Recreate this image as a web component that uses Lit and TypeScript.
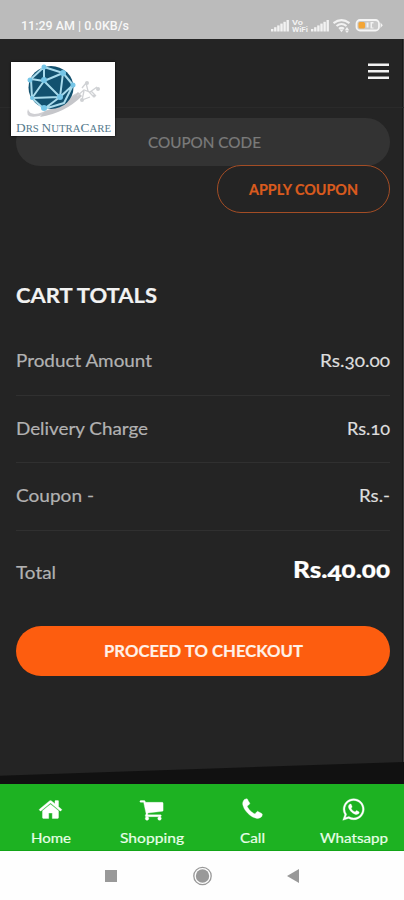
import { LitElement, html, svg, css } from "lit";
import { customElement } from "lit/decorators.js";

const label = (text: string, width: number, size: number, cls = "") => html`
  <svg class="label ${cls}" width=${width} height=${size + 6} font-size=${size}>
    <text x="0" y=${size} textLength=${width} lengthAdjust="spacingAndGlyphs">${text}</text>
  </svg>`;

const ROWS = [
  { name: "Product Amount", nameW: 136, value: "Rs.30.00", valueW: 70 },
  { name: "Delivery Charge", nameW: 132, value: "Rs.10", valueW: 43 },
  { name: "Coupon -", nameW: 78, value: "Rs.-", valueW: 31 },
];

const TABS = [
  {
    text: "Home", width: 40,
    path: "M1472 992v480q0 26-19 45t-45 19h-384v-384h-256v384h-384q-26 0-45-19t-19-45v-480q0-1 .5-3t.5-3l575-474 575 474q1 2 1 6zm223-69l-62 74q-8 9-21 11h-3q-13 0-21-7l-692-577-692 577q-12 8-24 7-13-2-21-11l-62-74q-8-10-7-23.5t11-21.5l719-599q32-26 76-26t76 26l244 204v-195q0-14 9-23t23-9h192q14 0 23 9t9 23v408l219 182q10 8 11 21.5t-7 23.5z",
  },
  {
    text: "Shopping", width: 64,
    path: "M704 1536q0 52-38 90t-90 38-90-38-38-90 38-90 90-38 90 38 38 90zm896 0q0 52-38 90t-90 38-90-38-38-90 38-90 90-38 90 38 38 90zm128-1088v512q0 24-16.5 42.5t-40.5 21.5l-1044 122q13 60 13 70 0 16-24 64h920q26 0 45 19t19 45-19 45-45 19h-1024q-26 0-45-19t-19-45q0-11 8-31.5t16-36 21.5-40 15.5-29.5l-177-823h-204q-26 0-45-19t-19-45 19-45 45-19h256q16 0 28.5 6.5t19.5 15.5 13 24.5 8 26 5.5 29.5 4.5 26h1201q26 0 45 19t19 45z",
  },
  {
    text: "Call", width: 25,
    path: "M1600 1240q0 27-10 70.5t-21 68.5q-21 50-122 106-94 51-186 51-27 0-53-3.5t-57.5-12.5-47-14.5-55.5-20.5-49-18q-98-35-175-83-127-79-264-216t-216-264q-48-77-83-175-3-9-18-49t-20.5-55.5-14.5-47-12.5-57.5-3.5-53q0-92 51-186 56-101 106-122 25-11 68.5-21t70.5-10q14 0 21 3 18 6 53 76 11 19 30 54t35 63.5 31 53.5q3 4 17.5 25t21.5 35.5 7 28.5q0 20-28.5 50t-62 55-62 53-28.5 46q0 9 5 22.5t8.5 20.5 14 24 11.5 19q76 137 174 235t235 174q2 1 19 11.5t24 14 20.5 8.5 22.5 5q18 0 46-28.5t53-62 55-62 50-28.5q14 0 28.5 7t35.5 21.5 25 17.5q25 15 53.5 31t63.5 35 54 30q70 35 76 53 3 7 3 21z",
  },
  {
    text: "Whatsapp", width: 68,
    path: "M1113 974q13 0 97.5 44t89.5 53q2 5 2 15 0 33-17 76-16 39-71 65.5t-102 26.5q-57 0-190-62-98-45-170-118t-148-185q-72-107-71-194v-8q3-91 74-158 24-22 52-22 6 0 18 1.5t19 1.5q19 0 26.5 6.5t15.5 27.5q8 20 33 88t25 75q0 21-34.5 57.5t-34.5 46.5q0 7 5 15 34 73 102 137 56 53 151 101 12 7 22 7 15 0 54-48.5t52-48.5zm-203 530q127 0 243.5-50t200.5-134 134-200.5 50-243.5-50-243.5-134-200.5-200.5-134-243.5-50-243.5 50-200.5 134-134 200.5-50 243.5q0 203 120 368l-79 233 242-77q158 104 345 104zm0-1382q153 0 292.5 60t240.5 161 161 240.5 60 292.5-60 292.5-161 240.5-240.5 161-292.5 60q-195 0-365-94l-417 134 136-405q-108-178-108-389 0-153 60-292.5t161-240.5 240.5-161 292.5-60z",
  },
];

const signal = (x: number) =>
  [0, 1, 2, 3, 4, 5].map((i) => svg`<rect x=${x + i * 3.1} y=${13.5 - (2.5 + i * 1.8)} width="2.4" height=${2.5 + i * 1.8} />`);

@customElement("app-root")
export class AppRoot extends LitElement {
  static styles = css`
    :host { display: block; width: 404px; height: 900px; overflow: hidden; font-family: Lato, "Noto Sans", sans-serif; }
    * { box-sizing: border-box; }
    svg { display: block; overflow: visible; flex: none; }
    .screen { display: flex; flex-direction: column; height: 900px; background: #242424; }
    .label { fill: currentColor; stroke: currentColor; stroke-width: 0.2px; font-variant-numeric: oldstyle-nums; }
    .status { height: 39px; background: #bbb; color: #f7f7f7; display: flex; justify-content: space-between; padding: 18px 21px 0 21px; flex: none; }
    .clock { font-family: Roboto, sans-serif; font-weight: 500; font-variant-numeric: normal; stroke: none; }
    .header { height: 69px; position: relative; border-bottom: 1px solid #2a2a2a; flex: none; display: flex; justify-content: flex-end; padding: 24px 15px 0 0; }
    .logo { position: absolute; left: 11px; top: 23px; width: 104px; height: 74px; background: #fff; z-index: 1; box-shadow: 0 0 2px #000; }
    .brand { font-family: "Liberation Serif", serif; }
    .body { background: linear-gradient(to left, #3c3c3c 1px, #181818 1px, #181818 2px, #242424 2px); display: flex; flex-direction: column; flex: none; }
    .content { display: flex; flex-direction: column; padding: 10px 14px 0 16px; height: 676px; flex: none; }
    .coupon { height: 48px; border-radius: 24px; background: #333; color: #7b7b7b; display: flex; justify-content: center; padding: 14px 0 0 3px; }
    .apply { align-self: flex-end; width: 173px; height: 48px; margin-top: -1px; border: 1px solid #a34d25; border-radius: 24px; color: #d95b1e; font-weight: 700; display: flex; justify-content: center; padding-top: 13.500px; }
    .title { margin-top: 68px; height: 27px; color: #f2f2f2; font-weight: 700; }
    .rows { display: flex; flex-direction: column; margin-top: 20px; }
    .row { height: 67.5px; border-bottom: 1px solid #303030; display: flex; justify-content: space-between; padding-top: 21px; color: #b2b2b2; }
    .value { color: #dedede; }
    .total { height: 95.5px; display: flex; justify-content: space-between; align-items: flex-start; padding-top: 23px; color: #b2b2b2; }
    .total .name { margin-top: 7px; }
    .sum { font-weight: 900; color: #fff; }
    .checkout { height: 50px; border-radius: 25px; background: #fd5d0f; color: #fff1e8; font-weight: 700; display: flex; justify-content: center; padding-top: 14px; }
    .wedge { margin: auto -14px 0 -16px; height: 22px; background: #111; clip-path: polygon(0 62%, 100% 0, 100% 100%, 0 100%); }
    .tabs { height: 67px; background: #1db222; color: #e9ffe9; display: grid; grid-template-columns: repeat(4, 1fr); flex: none; border-bottom: 1px solid #12a517; }
    .tab { display: flex; flex-direction: column; align-items: center; padding-top: 13px; gap: 7px; }
    .icon { fill: #fff; stroke: #fff; stroke-width: 25px; }
    .system { height: 49px; background: #fefefe; flex: none; }
  `;

  render() {
    return html`
      <div class="screen">
        <div class="status">
          ${label("11:29 AM | 0.0KB/s", 108, 12, "clock")}
          <svg width="112" height="16" fill="#f2f2f2">
            ${signal(0)}${signal(40)}
            <g font-family="Roboto, sans-serif" font-weight="700">
              <text x="21" y="6.500" font-size="8" textLength="11" lengthAdjust="spacingAndGlyphs">Vo</text>
              <text x="21" y="13.500" font-size="7" textLength="16" lengthAdjust="spacingAndGlyphs">WiFi</text>
            </g>
            <g fill="none" stroke="#f2f2f2" stroke-width="2.1">
              <path d="M62.500 5.200Q70.500-.8 78.500 5.200M65.500 8Q70.500 4 75.500 8M68 10.800Q70.500 8.800 73 10.800" />
            </g>
            <path d="M68.500 11.500h4l-2 2.700zM76 9l2 3h-4zM76 15l2-2.500h-4z" />
            <rect x="85.500" y="2" width="22.500" height="10.500" rx="3.500" fill="#c9c9c9" stroke="#f5f5f5" stroke-width="1.800" />
            <rect x="87.500" y="4" width="6.500" height="6.500" rx="1.500" fill="#f3a536" />
            <path d="M95.500 4.500h2v5h-2zM99.500 4h3v1.500h-1.500v4h1.500v1h-3zM109.500 4.500l2.300 2.700-2.300 2.800z" />
          </svg>
        </div>
        <div class="body">
          <div class="header">
            <svg class="logo" viewBox="0 0 104 74">
              <path d="M17 47Q13 57 28 54Q55 49 65 31Q48 44 32 50Q19 55 17 47Z" fill="#cfcfd3" />
              <path d="M34 49Q51 46 67 30l4 4Q54 51 29 55Z" fill="#c5c6ca" />
              <path d="M66 34l7-6 6 2 7-5M71 26l4-5 2 8 5 5M73 29l-2 9 8-3M80 29l5 5" fill="none" stroke="#d0d2d5" stroke-width="1.300" />
              <g fill="#cfd1d4"><circle cx="76" cy="21" r="2" /><circle cx="87" cy="27" r="2" /><circle cx="71" cy="38" r="2" /><circle cx="83" cy="34" r="1.500" /></g>
              <ellipse cx="40" cy="25.500" rx="22.500" ry="21.500" fill="#12516f" />
              <path d="M33 5L20 17l13 2L52 11 33 5l0 14L21 36 33 47l16-12L33 19l-12 17 28-1 13-12L52 11l-3 24M20 17l1 19M33 47l20-6 9-18" fill="none" stroke="#a9dbec" stroke-width="2" stroke-linejoin="round" />
              <g fill="#76c6e7"><circle cx="33" cy="5" r="2.500" /><circle cx="19" cy="18" r="2.500" /><circle cx="33" cy="18" r="3" /><circle cx="52" cy="11" r="3" /><circle cx="62" cy="23" r="2.500" /><circle cx="49" cy="35" r="3" /><circle cx="33" cy="46" r="3" /><circle cx="21" cy="36" r="2" /></g>
              <text class="brand" x="5" y="69.500" fill="#54798c" textLength="95" lengthAdjust="spacingAndGlyphs"><tspan font-size="13">D</tspan><tspan font-size="10.500">RS </tspan><tspan font-size="13">N</tspan><tspan font-size="10.500">UTRA</tspan><tspan font-size="13">C</tspan><tspan font-size="10.500">ARE</tspan></text>
            </svg>
            <svg width="21" height="18" fill="#f2f2f2">
              <rect y="0.500" width="21" height="2.500" /><rect y="7" width="21" height="2.500" /><rect y="13.500" width="21" height="2.500" />
            </svg>
          </div>
          <div class="content">
            <div class="coupon">${label("COUPON CODE", 113, 16)}</div>
            <div class="apply">${label("APPLY COUPON", 109, 14.5)}</div>
            <div class="title">${label("CART TOTALS", 141, 21.5)}</div>
            <div class="rows">
              ${ROWS.map((r) => html`<div class="row">${label(r.name, r.nameW, 18)}${label(r.value, r.valueW, 18, "value")}</div>`)}
            </div>
            <div class="total">${label("Total", 40, 18, "name")}${label("Rs.40.00", 97, 23.5, "sum")}</div>
            <div class="checkout">${label("PROCEED TO CHECKOUT", 199, 17)}</div>
            <div class="wedge"></div>
          </div>
        </div>
        <div class="tabs">
          ${TABS.map((t) => html`<div class="tab">
            <svg class="icon" width="25" height="25" viewBox="0 0 1792 1792"><path d=${t.path} /></svg>
            ${label(t.text, t.width, 14)}
          </div>`)}
        </div>
        <svg class="system" width="404" height="49" fill="#999">
          <rect x="105" y="19" width="12" height="12" />
          <circle cx="202.500" cy="25" r="8.700" fill="none" stroke="#999" stroke-width="1.300" /><circle cx="202.500" cy="25" r="6.700" />
          <path d="M287 25l12-7v14z" />
        </svg>
      </div>`;
  }
}
